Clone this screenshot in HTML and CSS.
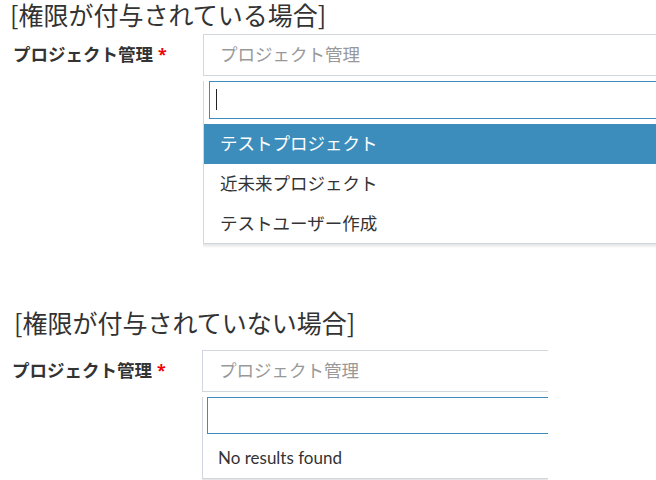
FILE: index.html
```html
<!DOCTYPE html>
<html lang="ja">
<head>
<meta charset="utf-8">
<link rel="stylesheet" href="styles.css">
</head>
<body>
<section class="case case-granted">
  <h2 class="case-title">[権限が付与されている場合]</h2>
  <div class="field">
    <label class="field-label">プロジェクト管理<span class="req">*</span></label>
    <div class="select-clip wide">
      <div class="select">
        <div class="select-box">プロジェクト管理</div>
        <div class="dropdown">
          <div class="search"><span class="caret"></span></div>
          <ul class="options">
            <li class="option active">テストプロジェクト</li>
            <li class="option">近未来プロジェクト</li>
            <li class="option last">テストユーザー作成</li>
          </ul>
        </div>
      </div>
    </div>
  </div>
</section>

<section class="case case-denied">
  <h2 class="case-title">[権限が付与されていない場合]</h2>
  <div class="field">
    <label class="field-label">プロジェクト管理<span class="req">*</span></label>
    <div class="select-clip narrow">
      <div class="select">
        <div class="select-box">プロジェクト管理</div>
        <div class="dropdown">
          <div class="search"></div>
          <div class="no-results">No results found</div>
        </div>
      </div>
    </div>
  </div>
</section>
</body>
</html>
```
FILE: styles.css
```css
html, body {
  margin: 0;
  padding: 0;
  background: #fff;
}
body {
  width: 656px;
  height: 480px;
  overflow: hidden;
  font-family: "Noto Sans CJK JP", "Noto Sans", sans-serif;
  color: #333;
}
.case-title {
  margin: 0;
  font-size: 25px;
  line-height: 28px;
  font-weight: 400;
  color: #333;
  white-space: nowrap;
}
.case-granted .case-title {
  padding-left: 10px;
}
.case-denied {
  margin-top: 60px;
}
.case-denied .case-title {
  padding-left: 14px;
}
.field {
  display: flex;
  align-items: flex-start;
}
.case-granted .field {
  margin-top: 6px;
}
.case-denied .field {
  margin-top: 14px;
}
.field-label {
  box-sizing: border-box;
  width: 203px;
  flex: none;
  padding-left: 13px;
  font-size: 17.5px;
  font-weight: 700;
  line-height: 40px;
  color: #333;
  white-space: nowrap;
}
.case-denied .field-label {
  width: 202px;
  padding-left: 12px;
}
.req {
  color: #e00;
  font-family: "Noto Sans", sans-serif;
  font-size: 16px;
  margin-left: 5px;
  position: relative;
  top: -1px;
}
.select-clip {
  overflow: hidden;
  padding-bottom: 4px;
}
.select-clip.wide {
  width: 460px;
}
.select-clip.narrow {
  width: 346px;
}
.select {
  width: 480px;
}
.select-box {
  box-sizing: border-box;
  height: 42px;
  border: 1px solid #d2d6de;
  padding-left: 16px;
  padding-bottom: 2px;
  font-size: 17.5px;
  line-height: 38px;
  color: #999;
  white-space: nowrap;
}
.dropdown {
  border: 1px solid #d2d6de;
  border-top: none;
  box-shadow: -1px 2px 3px rgba(0, 0, 0, 0.12);
}
.search {
  box-sizing: border-box;
  height: 38px;
  margin: 5px 5px 5px 5px;
  border: 1px solid #3c8dbc;
  padding: 7px 0 0 6px;
}
.case-denied .search {
  height: 37px;
  margin: 5px 4px 5px 4px;
}
.caret {
  display: block;
  width: 0;
  height: 21px;
  border-left: 1px solid #222;
}
.options {
  list-style: none;
  margin: 0;
  padding: 0;
}
.option {
  box-sizing: border-box;
  height: 40px;
  padding-left: 16px;
  padding-bottom: 2px;
  font-size: 17.5px;
  line-height: 38px;
  color: #333;
  white-space: nowrap;
}
.option.last {
  height: 39px;
}
.option.active {
  background: #3c8dbc;
  color: #fff;
}
.no-results {
  height: 39px;
  padding-left: 15px;
  font-family: "Lato", "Noto Sans", sans-serif;
  font-size: 17px;
  line-height: 38px;
  color: #333;
}
```
